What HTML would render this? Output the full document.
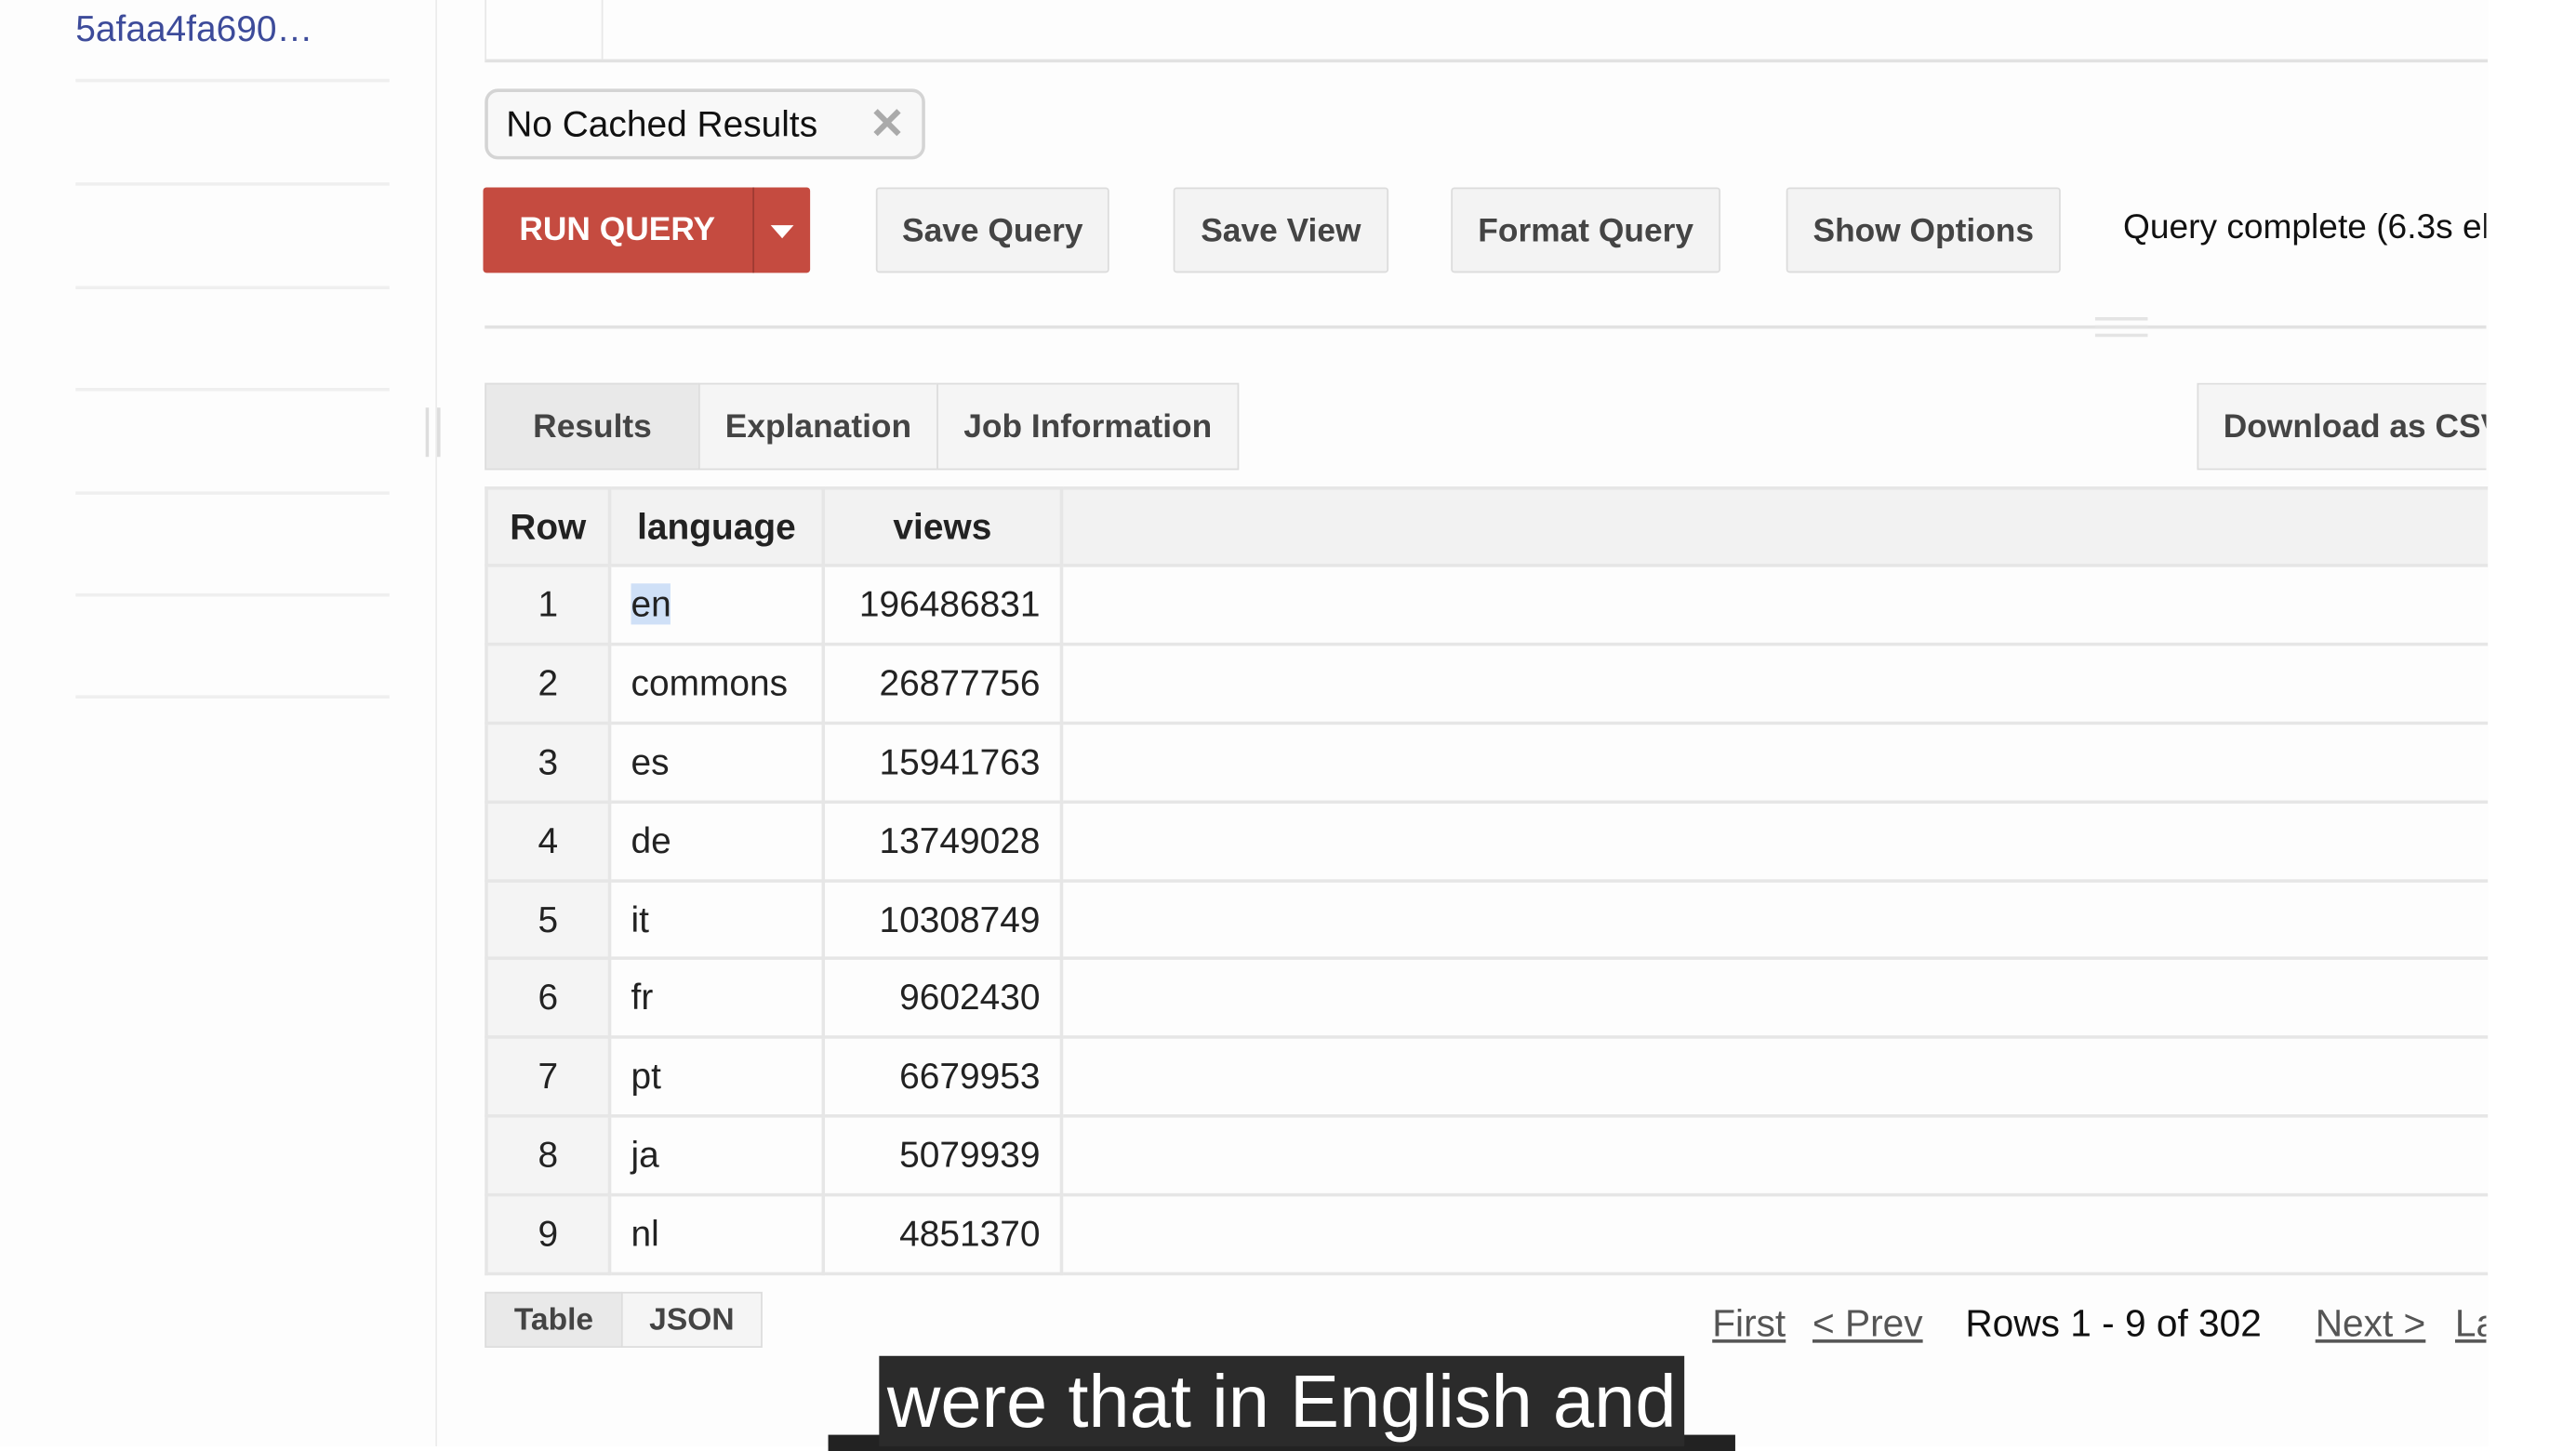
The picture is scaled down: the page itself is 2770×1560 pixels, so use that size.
<!DOCTYPE html>
<html><head><meta charset="utf-8"><style>
html,body{margin:0;padding:0;background:#fff;overflow:hidden;width:2770px;height:1554px;}
#w{position:absolute;left:0;top:0;width:1568px;height:880px;transform:scale(1.767);transform-origin:0 0;font-family:"Liberation Sans",Arial,sans-serif;background:#fdfdfd;}
.a{position:absolute;}
.hl{position:absolute;left:46px;width:191px;height:2px;background:#efefef;}
.btn{position:absolute;top:114px;height:52px;background:#f3f3f3;border:1px solid #dcdcdc;border-radius:2px;font-weight:bold;font-size:20px;color:#444;text-align:center;line-height:52px;box-sizing:border-box;}
.tab{position:absolute;top:233px;height:53px;line-height:53px;font-weight:bold;font-size:20px;color:#444;text-align:center;border:1px solid #ddd;background:#f5f5f5;box-sizing:border-box;}
table{position:absolute;left:295px;top:296px;border-collapse:collapse;width:1230px;font-size:22px;color:#222;}
td,th{border:2px solid #e6e6e6;height:47.9px;padding:0 12px;box-sizing:border-box;}
th{background:#f2f2f2;font-weight:bold;height:47px;}
td.r{background:#f4f4f4;text-align:center;}
td.v{text-align:right;}
.lk{position:absolute;top:792px;font-size:23px;color:#555;text-decoration:underline;}
</style></head><body><div id="w">
<div class="a" style="left:46px;top:5px;font-size:22px;color:#3d4b9a;">5afaa4fa690…</div>
<div class="hl" style="top:48px"></div><div class="hl" style="top:111px"></div><div class="hl" style="top:174px"></div><div class="hl" style="top:236px"></div><div class="hl" style="top:299px"></div><div class="hl" style="top:361px"></div><div class="hl" style="top:423px"></div>
<div class="a" style="left:265px;top:0;width:1px;height:880px;background:#ececec"></div>
<div class="a" style="left:259px;top:248px;width:2px;height:30px;background:#ddd"></div>
<div class="a" style="left:266px;top:248px;width:2px;height:30px;background:#ddd"></div>
<div class="a" style="left:295px;top:0;width:1218px;height:36px;border-bottom:2px solid #e2e2e2;border-left:1px solid #e8e8e8;"></div>
<div class="a" style="left:366px;top:0;width:1px;height:36px;background:#e8e8e8"></div>
<div class="a" style="left:295px;top:54px;width:264px;height:39px;border:2px solid #d4d4d4;border-radius:8px;background:#f8f8f8;font-size:22px;line-height:39px;color:#111;"><span style="margin-left:11px">No Cached Results</span><span style="position:absolute;left:232px;color:#aaa;font-size:26px;font-weight:bold">✕</span></div>
<div class="a" style="left:294px;top:114px;width:199px;height:52px;background:#c54b40;border-radius:2px;color:#fff;font-weight:bold;font-size:20px;line-height:52px;"><span style="margin-left:22px">RUN QUERY</span><div class="a" style="left:164px;top:0;width:1px;height:52px;background:#9e3a31"></div><div class="a" style="left:175px;top:23px;width:0;height:0;border-left:7px solid transparent;border-right:7px solid transparent;border-top:8px solid #fff"></div></div>
<div class="btn" style="left:533px;width:142px">Save Query</div>
<div class="btn" style="left:714px;width:131px">Save View</div>
<div class="btn" style="left:883px;width:164px">Format Query</div>
<div class="btn" style="left:1087px;width:167px">Show Options</div>
<div class="a" style="left:1292px;top:127px;font-size:21px;color:#111;width:221px;overflow:hidden;white-space:nowrap;">Query complete (6.3s elapsed)</div>
<div class="a" style="left:295px;top:198px;width:1218px;height:2px;background:#e2e2e2"></div>
<div class="a" style="left:1275px;top:193px;width:32px;height:2px;background:#e4e4e4"></div><div class="a" style="left:1275px;top:198px;width:32px;height:2px;background:#e4e4e4"></div><div class="a" style="left:1275px;top:203px;width:32px;height:2px;background:#e4e4e4"></div>
<div class="tab" style="left:295px;width:131px;background:#e9e9e9">Results</div>
<div class="tab" style="left:425px;width:146px">Explanation</div>
<div class="tab" style="left:570px;width:184px">Job Information</div>
<div class="a" style="left:1337px;top:233px;width:176px;height:53px;overflow:hidden"><div class="tab" style="left:0;top:0;width:200px;text-align:left;padding-left:15px;white-space:nowrap">Download as CSV</div></div>
<table>
<colgroup><col style="width:75px"><col style="width:130px"><col style="width:145px"><col></colgroup>
<tr><th>Row</th><th>language</th><th>views</th><th></th></tr>
<tr><td class="r">1</td><td><span style="background:#cfe0f7">en</span></td><td class="v">196486831</td><td></td></tr>
<tr><td class="r">2</td><td>commons</td><td class="v">26877756</td><td></td></tr>
<tr><td class="r">3</td><td>es</td><td class="v">15941763</td><td></td></tr>
<tr><td class="r">4</td><td>de</td><td class="v">13749028</td><td></td></tr>
<tr><td class="r">5</td><td>it</td><td class="v">10308749</td><td></td></tr>
<tr><td class="r">6</td><td>fr</td><td class="v">9602430</td><td></td></tr>
<tr><td class="r">7</td><td>pt</td><td class="v">6679953</td><td></td></tr>
<tr><td class="r">8</td><td>ja</td><td class="v">5079939</td><td></td></tr>
<tr><td class="r">9</td><td>nl</td><td class="v">4851370</td><td></td></tr>
</table>
<div class="a" style="left:1514px;top:0;width:60px;height:880px;background:#fff"></div>
<div class="tab" style="left:295px;top:786px;width:84px;height:34px;line-height:34px;font-size:19px;background:#e9e9e9">Table</div>
<div class="tab" style="left:378px;top:786px;width:86px;height:34px;line-height:34px;font-size:19px">JSON</div>
<div class="lk" style="left:1042px">First</div>
<div class="lk" style="left:1103px">&lt; Prev</div>
<div class="a" style="left:1196px;top:792px;font-size:23px;color:#111">Rows 1 - 9 of 302</div>
<div class="lk" style="left:1409px">Next &gt;</div>
<div class="a" style="left:1494px;top:792px;width:19px;overflow:hidden"><span style="font-size:23px;color:#555;text-decoration:underline">Last</span></div>
<div class="a" style="left:504px;top:873px;width:552px;height:10px;background:#222"></div>
<div class="a" style="left:535px;top:825px;width:490px;height:55px;background:#2b2b2b;color:#fff;font-size:45px;line-height:55px;text-align:center;white-space:nowrap">were that in English and</div>
</div></body></html>
